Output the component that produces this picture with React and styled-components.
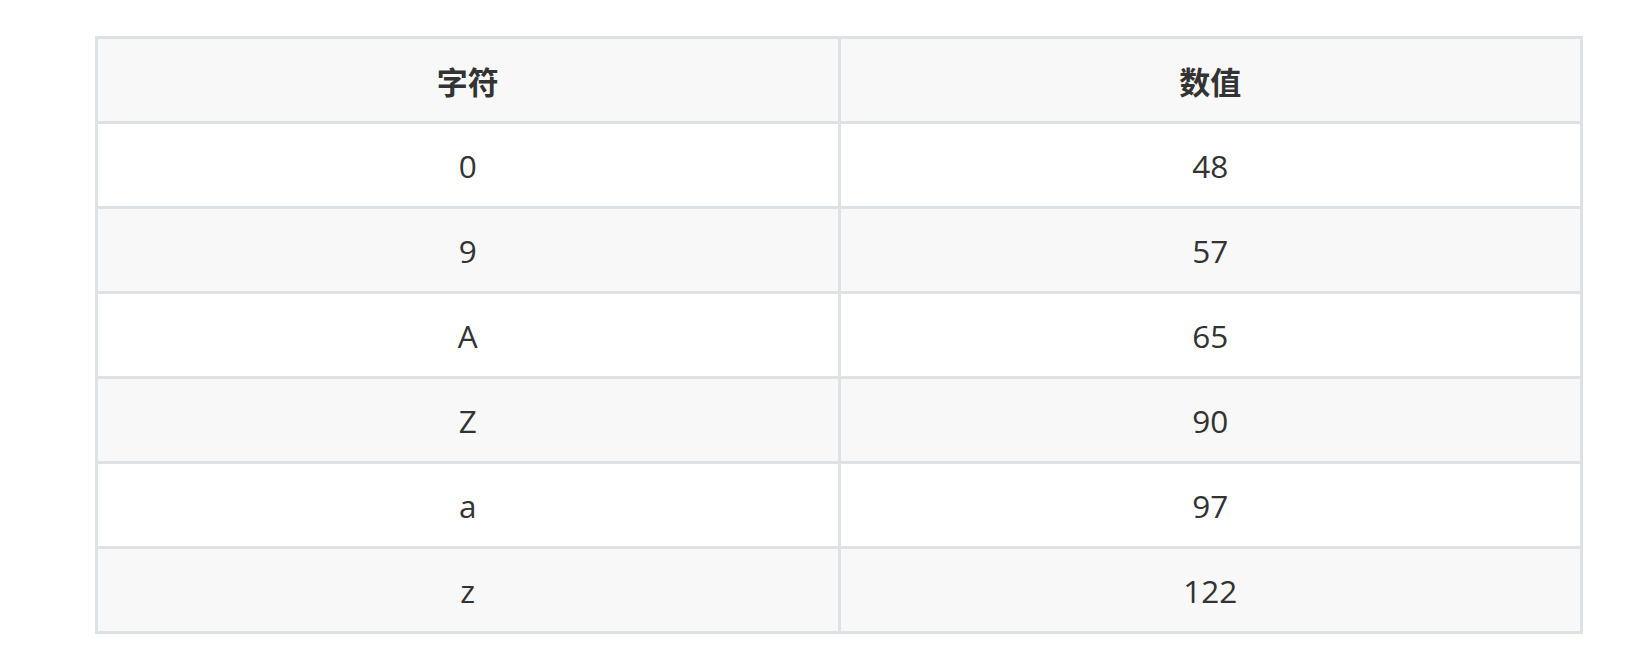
import React from 'react';
import styled, { createGlobalStyle } from 'styled-components';

const Global = createGlobalStyle`
  body {
    margin: 0;
    background: #fff;
    font-family: "Open Sans", "Noto Sans CJK SC", sans-serif;
  }
`;

const Page = styled.div`
  padding: 36px 0 0 95px;
`;

const Table = styled.div`
  display: grid;
  grid-template-columns: 1fr 1fr;
  grid-auto-rows: 82px;
  gap: 3px;
  padding: 3px;
  width: 1488px;
  box-sizing: border-box;
  background: #dfe2e5;
`;

const Cell = styled.div`
  display: flex;
  align-items: center;
  justify-content: center;
  background: ${p => (p.$shade ? '#f8f8f8' : '#fff')};
  color: #333;
  font-size: ${p => (p.$head ? '31px' : '31.5px')};
  font-weight: ${p => (p.$head ? 700 : 400)};
`;

const rows = [
  ['0', '48'],
  ['9', '57'],
  ['A', '65'],
  ['Z', '90'],
  ['a', '97'],
  ['z', '122'],
];

export default function App() {
  return (
    <Page>
      <Global />
      <Table>
        <Cell $head $shade>字符</Cell>
        <Cell $head $shade>数值</Cell>
        {rows.map(([ch, val], i) => (
          <React.Fragment key={ch}>
            <Cell $shade={i % 2 === 1}>{ch}</Cell>
            <Cell $shade={i % 2 === 1}>{val}</Cell>
          </React.Fragment>
        ))}
      </Table>
    </Page>
  );
}
